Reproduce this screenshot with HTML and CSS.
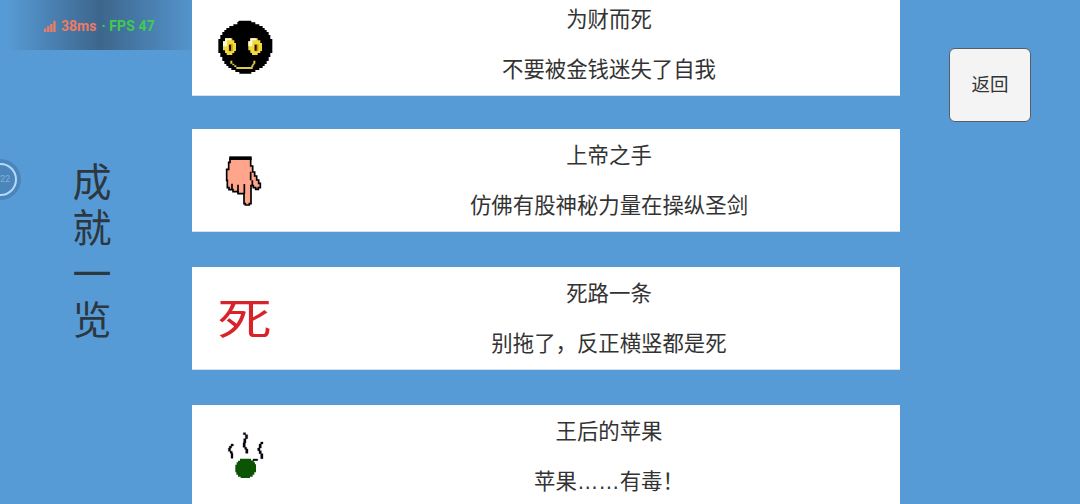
FILE: index.html
```
<!DOCTYPE html>
<html lang="zh-CN">
<head>
  <meta charset="UTF-8">
  <meta name="viewport" content="width=device-width, initial-scale=1.0">
  <title>成就一览</title>
  <link rel="stylesheet" href="styles.css">
</head>

<body>
<div class="page">
  <div class="side">
    <h1 class="title">成就一览</h1>
  </div>

  <ul class="list">
    <li class="card first">
      <svg class="icon" viewBox="0 0 210 210" width="70" height="70">
        <path d="M88 26h36v5h12v6h12v5h10v6h6v6h6v6h6v9h5v12h6v42h-6v12h-5v12h-6v9h-6v6h-6v6h-10v6h-12v6h-12v5H88v-5H76v-6H64v-6h-9v-6h-6v-6h-6v-9h-6v-12h-6v-12h-6V81h6V69h6v-9h6v-6h6v-6h9v-6h12v-5h12v-6h0z" fill="#000"/>
        <path d="M45 79h22v6h6v8h5v24h-5v6h-6v6H50v-6h-5v-8h-6V88h6zM121 79h22v6h8v8h5v24h-5v6h-8v6h-17v-6h-5v-8h-6V88h6z" fill="#f4d83b"/>
        <path d="M45 79h18v6H51v18H39V88h6zM121 79h18v6h-12v18h-12V88h6z" fill="#fffbd5"/>
        <path d="M56 97h12v21H56zM133 97h12v21h-12z" fill="#c39a14"/>
        <path d="M57 98h6v18h-6zM134 98h6v18h-6z" fill="#1d1700"/>
        <path d="M61 146h6v9h-6zM67 155h6v5h-6zM73 160h6v5h-6zM79 165h49v6H79zM124 160h6v5h-6zM127 155h6v5h-6zM130 146h6v9h-6z" fill="#e3cc43"/>
      </svg>
      <div class="text">
        <p>为财而死</p>
        <p>不要被金钱迷失了自我</p>
      </div>
    </li>
    <li class="card">
      <svg class="icon hand" viewBox="0 0 180 195" width="60" height="65">
        <path d="M45 40h62v23h6v18h6v12h6v12h6v10h5v13h-6v5h-8v-5h-7v-6h-7v54h-5v4H91v-4h-4v-30H69v-6H54v-6H42v-6h-5v-22h-2V73h6V52h4z" fill="#ffa58c" stroke="#000" stroke-width="5"/>
        <path d="M43 34h67v11H43z" fill="#000"/>
        <path d="M51 116v18M69 119v24M88 117v29M107 80v26M112 106v16" fill="none" stroke="#000" stroke-width="5"/>
      </svg>
      <div class="text">
        <p>上帝之手</p>
        <p>仿佛有股神秘力量在操纵圣剑</p>
      </div>
    </li>
    <li class="card">
      <svg class="icon" viewBox="0 0 70 70" width="70" height="70">
        <text class="death" transform="translate(34.5 48.5) scale(1.26 1)" text-anchor="middle">死</text>
      </svg>
      <div class="text">
        <p>死路一条</p>
        <p>别拖了，反正横竖都是死</p>
      </div>
    </li>
    <li class="card">
      <svg class="icon apple" viewBox="0 0 165 180" width="55" height="60">
        <path d="M70 23h7v6h-7zM76 29h7v12h-7zM71 41h7v12h-7zM69 53h7v14h-7zM74 67h6v6h-6zM77 72h7v13h-7zM33 57h7v6h-7zM28 63h7v6h-7zM25 69h7v10h-7zM30 79h7v6h-7zM33 85h6v15h-6zM122 51h7v6h-7zM117 57h7v12h-7zM113 69h7v8h-7zM117 77h7v9h-7zM122 86h7v15h-7zM99 102h14v5H99zM94 107h6v6h-6z" fill="#0b0410" stroke="#0b0410" stroke-width="1"/>
        <path d="M60 101h33v6h7v5h5v6h3v24h-5v7h-5v6h-8v4H62v-4h-8v-6h-5v-7h-3v-23h4v-7h4v-5h6z" fill="#0b5404"/>
      </svg>
      <div class="text">
        <p>王后的苹果</p>
        <p>苹果<span class="dots">……</span>有毒！</p>
      </div>
    </li>
  </ul>

  <div class="side right">
    <button class="back">返回</button>
  </div>
</div>

<div class="monitor">
  <svg width="12" height="11" viewBox="0 0 12 11">
    <path d="M0 7.5h2.3V11H0zM3.1 5h2.3v6H3.1zM6.2 3h2.3v8H6.2zM9.3 0h2.3v11H9.3z" fill="#ee7c63"/>
  </svg>
  <span class="ping">38ms</span>
  <span class="fps">· FPS 47</span>
</div>
<div class="ball"><span>22</span></div>
</body>
</html>
```
FILE: styles.css
```
* {
  padding: 0;
  margin: 0;
  list-style: none;
  box-sizing: border-box;
}

body {
  height: 504px;
  overflow: hidden;
  background: #579bd6;
  color: #333;
  font-family: "Noto Sans CJK SC", sans-serif;
}

.page {
  display: grid;
  grid-template-columns: 192px 708px 180px;
  height: 504px;
  overflow: hidden;
}

.side {
  display: flex;
  flex-direction: column;
  align-items: center;
  padding-top: 156px;
}

.title {
  width: 39px;
  margin-right: 8px;
  font-size: 39px;
  font-weight: normal;
  line-height: 46px;
  color: #2d3740;
}

.list {
  display: flex;
  flex-direction: column;
  gap: 35px;
  margin-top: -7px;
}

.card {
  display: flex;
  flex: none;
  align-items: flex-start;
  height: 103px;
  padding-left: 18px;
  background: #fff;
  border-bottom: 1px solid #d5e1ec;
}

.first {
  margin-bottom: -2px;
}

.icon {
  flex: none;
  margin-top: 19px;
  overflow: visible;
}

.hand {
  margin: 16px 5px 0;
}

.apple {
  margin: 20px 5px 0 10px;
}

.death {
  font-size: 43px;
  font-weight: normal;
  fill: #d9232b;
}

.text {
  flex: 1;
  padding-left: 38px;
  font-size: 21.4px;
  line-height: 49.5px;
  text-align: center;
}

.dots {
  font-family: "Liberation Sans", sans-serif;
}

.right {
  padding-top: 48px;
}

.back {
  width: 82px;
  height: 74px;
  padding-bottom: 4px;
  background: #f4f4f4;
  border: 1px solid #555f68;
  border-radius: 6px;
  color: #333;
  font-family: inherit;
  font-size: 18.5px;
}

/* 左上角的性能浮层 */
.monitor {
  position: absolute;
  left: 0;
  top: 0;
  display: flex;
  align-items: center;
  width: 192px;
  height: 50px;
  padding: 2px 0 0 44px;
  background: linear-gradient(90deg, rgba(52, 84, 115, 0) 3%, rgba(52, 84, 115, .75) 52%, rgba(52, 84, 115, .1) 100%);
  font: bold 14px Roboto, sans-serif;
  white-space: nowrap;
}

.ping {
  margin-left: 5px;
  color: #ee7c63;
}

.fps {
  margin-left: 5px;
  color: #3ecb52;
  letter-spacing: .1px;
}

/* 贴边的悬浮球 */
.ball {
  position: absolute;
  left: -20px;
  top: 159px;
  width: 41px;
  height: 41px;
  padding: 4px;
  border-radius: 50%;
  background: #4a86bb;
}

.ball span {
  display: block;
  height: 33px;
  padding-right: 5px;
  border: 2px solid #b4d9fa;
  border-radius: 50%;
  color: #83aed3;
  font: 9px/29px Roboto, sans-serif;
  text-align: right;
}
```
